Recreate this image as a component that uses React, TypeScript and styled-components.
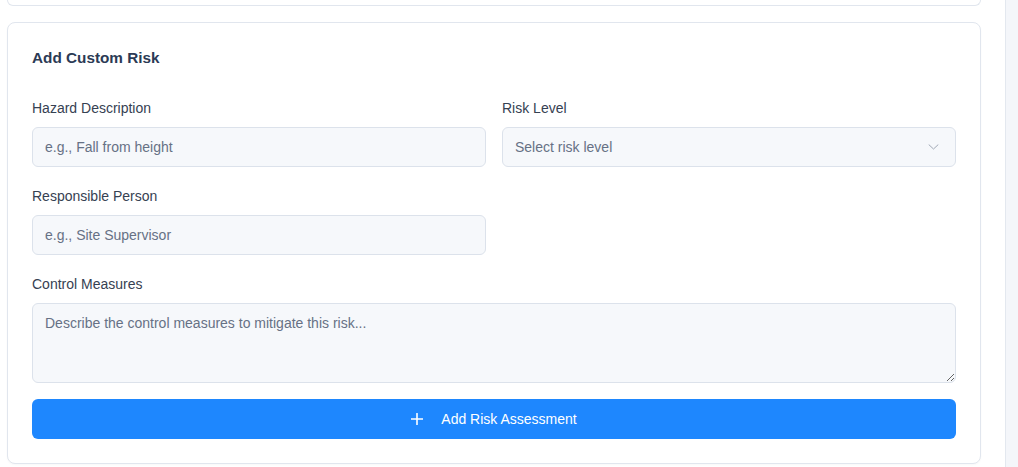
import React from 'react';
import styled, { createGlobalStyle } from 'styled-components';

const GlobalStyle = createGlobalStyle`
  html, body {
    margin: 0;
    padding: 0;
    background: #ffffff;
    font-family: "Liberation Sans", Arial, Helvetica, sans-serif;
  }
  * {
    box-sizing: border-box;
  }
`;

const colors = {
  border: '#e1e6ee',
  fieldBg: '#f6f8fb',
  fieldBorder: '#dce2eb',
  title: '#2b3a55',
  label: '#364152',
  placeholder: '#667185',
  primary: '#1e87fe',
};

const Page = styled.div`
  display: flex;
  width: 100%;
  height: 467px;
  overflow: hidden;
`;

const Main = styled.div`
  flex: 1;
  display: flex;
  flex-direction: column;
  gap: 16px;
  padding: 0 24px 0 7px;
`;

const Side = styled.div`
  width: 13px;
  flex-shrink: 0;
  background: #f4f6fa;
  border-left: 1px solid #e3e8ef;
`;

const PrevCard = styled.div`
  height: 6px;
  border: 1px solid ${colors.border};
  border-top: none;
  border-radius: 0 0 8px 8px;
  background: #fff;
`;

const Card = styled.section`
  border: 1px solid ${colors.border};
  border-radius: 8px;
  background: #fff;
  padding: 24px;
  box-shadow: 0 1px 2px rgba(15, 23, 42, 0.03);
`;

const Title = styled.h3`
  margin: 0 0 28px;
  font-size: 15.3px;
  line-height: 22px;
  font-weight: 700;
  color: ${colors.title};
`;

const Grid = styled.div`
  display: grid;
  grid-template-columns: 1fr 1fr;
  column-gap: 16px;
  row-gap: 18px;
`;

const Field = styled.div<{ full?: boolean }>`
  display: flex;
  flex-direction: column;
  grid-column: ${(p) => (p.full ? '1 / -1' : 'auto')};
`;

const Label = styled.label`
  font-size: 14px;
  line-height: 20px;
  padding-top: 1px;
  color: ${colors.label};
  margin-bottom: 9px;
`;

const fieldBase = `
  width: 100%;
  border: 1px solid ${colors.fieldBorder};
  border-radius: 6px;
  background: ${colors.fieldBg};
  font-family: "Liberation Sans", Arial, Helvetica, sans-serif;
  font-size: 14px;
  color: ${colors.label};
  outline: none;
`;

const Input = styled.input`
  ${fieldBase}
  height: 40px;
  padding: 0 12px;
  &::placeholder {
    color: ${colors.placeholder};
  }
`;

const SelectBox = styled.div`
  ${fieldBase}
  height: 40px;
  padding: 0 16px 0 12px;
  display: flex;
  align-items: center;
  justify-content: space-between;
  color: ${colors.placeholder};
  cursor: pointer;
`;

const TextArea = styled.textarea`
  ${fieldBase}
  height: 80px;
  padding: 11px 12px;
  line-height: 16px;
  resize: vertical;
  display: block;
  &::placeholder {
    color: ${colors.placeholder};
  }
`;

const SubmitButton = styled.button`
  margin-top: 16px;
  width: 100%;
  height: 40px;
  border: none;
  border-radius: 6px;
  background: ${colors.primary};
  color: #fff;
  font-family: "Liberation Sans", Arial, Helvetica, sans-serif;
  font-size: 14px;
  display: flex;
  align-items: center;
  justify-content: center;
  gap: 18px;
  cursor: pointer;
`;

const Chevron = () => (
  <svg width="11" height="6" viewBox="0 0 11 6" fill="none">
    <path d="M1 0.8L5.5 5L10 0.8" stroke="#a0a8b5" strokeWidth="1" strokeLinecap="round" strokeLinejoin="round" />
  </svg>
);

const PlusIcon = () => (
  <svg width="12" height="12" viewBox="0 0 12 12" fill="none">
    <path d="M6 0.5V11.5M0.5 6H11.5" stroke="#fff" strokeWidth="1.6" strokeLinecap="round" />
  </svg>
);

export default function App() {
  return (
    <Page>
      <GlobalStyle />
      <Main>
        <PrevCard />
        <Card>
          <Title>Add Custom Risk</Title>
          <Grid>
            <Field>
              <Label>Hazard Description</Label>
              <Input placeholder="e.g., Fall from height" />
            </Field>
            <Field>
              <Label>Risk Level</Label>
              <SelectBox>
                <span>Select risk level</span>
                <Chevron />
              </SelectBox>
            </Field>
            <Field>
              <Label>Responsible Person</Label>
              <Input placeholder="e.g., Site Supervisor" />
            </Field>
            <div />
            <Field full>
              <Label>Control Measures</Label>
              <TextArea placeholder="Describe the control measures to mitigate this risk..." />
            </Field>
          </Grid>
          <SubmitButton>
            <PlusIcon />
            <span>Add Risk Assessment</span>
          </SubmitButton>
        </Card>
      </Main>
      <Side />
    </Page>
  );
}
